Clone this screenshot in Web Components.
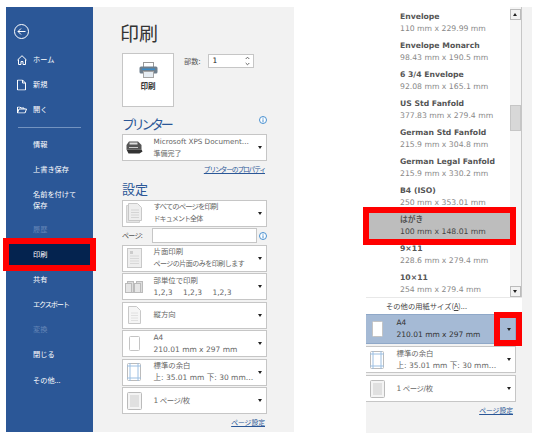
<!DOCTYPE html>
<html lang="ja">
<head>
<meta charset="utf-8">
<style>
  html, body { margin: 0; padding: 0; background: #fff; }
  body { width: 542px; height: 445px; overflow: hidden; font-family: "DejaVu Sans", "Noto Sans CJK JP", sans-serif; }
</style>
</head>
<body>
<template id="print-option-tpl">
  <style>
    :host { display: flex; align-items: center; box-sizing: border-box; height: 27px; background: #fff; border: 1px solid #c6c6c6; position: relative; color: #666; }
    :host([active]) { background: #a5bad5; border-color: #8fa8c8; color: #333; }
    .icon { width: 22px; flex: none; display: flex; justify-content: center; }
    .text { flex: 1; margin-left: 8.5px; min-width: 0; font-size: 7.4px; line-height: 12px; white-space: nowrap; }
    .arrow { flex: none; width: 0; height: 0; border: 2.5px solid transparent; border-top: 3px solid #222; border-bottom: 0; margin-right: 4px; }
    .l2 { display: block; font-size: 7.5px; }
  </style>
  <div class="icon"><slot name="icon"></slot></div>
  <div class="text"><slot></slot><span class="l2"><slot name="sub"></slot></span></div>
  <div class="arrow"></div>
</template>
<script>
class PrintOption extends HTMLElement {
  constructor() {
    super();
    this.attachShadow({ mode: "open" }).appendChild(document.getElementById("print-option-tpl").content.cloneNode(true));
  }
}
customElements.define("print-option", PrintOption);

const plainPage = (w, h) =>
  `<svg slot="icon" width="${w}" height="${h}" viewBox="0 0 ${w} ${h}"><rect x=".5" y=".5" width="${w - 1}" height="${h - 1}" rx="1" fill="#fff" stroke="#c4c4c4"/></svg>`;
const stackIcon = `<svg slot="icon" width="16" height="20" viewBox="0 0 16 20"><path d="M.5 2.500h10l3 3V19.500H.5z" fill="#e4e4e4" stroke="#d0d0d0"/><path d="M2.500.5h9l4 4v13h-13z" fill="#eee" stroke="#c8c8c8"/><path d="M5 7h8M5 9.500h8M5 12h8M5 14.500h8" stroke="#d4d4d4"/></svg>`;
const sidedIcon = `<svg slot="icon" width="15" height="20" viewBox="0 0 15 20"><rect x=".5" y=".5" width="14" height="19" fill="#eee" stroke="#c8c8c8"/><path d="M3 8h9M3 10.500h9M3 13h9M3 15.500h9" stroke="#d8d8d8"/><rect x="3" y="3" width="3" height="3" fill="#ccc"/></svg>`;
const collateIcon = `<svg slot="icon" width="18" height="12" viewBox="0 0 18 12"><rect x="2.500" y=".5" width="6" height="11" fill="#ddd" stroke="#bbb"/><rect x=".5" y="2.500" width="6" height="9" fill="#e6e6e6" stroke="#bbb"/><rect x="11.500" y=".5" width="6" height="11" fill="#ddd" stroke="#bbb"/><rect x="9.500" y="2.500" width="6" height="9" fill="#e6e6e6" stroke="#bbb"/></svg>`;
const portraitIcon = `<svg slot="icon" width="13" height="18" viewBox="0 0 13 18"><path d="M.5.5h8l4 4v13H.5z" fill="#f5f5f5" stroke="#c8c8c8"/><path d="M3 7h7M3 9.500h7M3 12h7M3 14.500h7" stroke="#e0e0e0"/></svg>`;
const marginIcon = `<svg slot="icon" width="14" height="18" viewBox="0 0 14 18"><rect x=".5" y=".5" width="13" height="17" rx="1" fill="#fff" stroke="#bbb"/><path d="M3 0v18M11 0v18M0 3h14M0 15h14" stroke="#9cbfe2"/></svg>`;
const sheetIcon = `<svg slot="icon" width="15" height="18" viewBox="0 0 15 18"><rect x=".5" y=".5" width="14" height="17" rx="1" fill="#f4f4f4" stroke="#bbb"/><rect x="3" y="3" width="9" height="12" fill="#e0e0e0"/></svg>`;
const infoIcon = `<svg width="8" height="8" viewBox="0 0 8 8" style="flex:none"><circle cx="4" cy="4" r="3.500" fill="#fff" stroke="#4a90d0"/><path d="M4 3.300V6.300M4 1.700v1" stroke="#4a90d0"/></svg>`;

class NavItem extends HTMLElement {
  constructor() {
    super();
    this.attachShadow({ mode: "open" }).innerHTML = `
      <style>
        :host { display: flex; align-items: center; color: #fff; font-size: 7.2px; line-height: 11px; padding-left: 27px; box-sizing: border-box; height: 25px; position: relative; font-family: "Noto Sans CJK JP", sans-serif; }
        :host([dim]) { color: #6485b6; }
        :host([selected]) { isolation: isolate; z-index: 1; }
        :host([selected])::before { content: ""; position: absolute; left: 3px; right: 3px; top: 2px; bottom: 2px; background: #04234f; outline: 6px solid #f00; z-index: -1; }
        ::slotted(svg) { position: absolute; left: 11px; top: 50%; transform: translateY(-50%); }
      </style>
      <slot></slot>`;
  }
}
customElements.define("nav-item", NavItem);

class BackstageNav extends HTMLElement {
  constructor() {
    super();
    this.attachShadow({ mode: "open" }).innerHTML = `
      <style>
        :host { display: block; width: 87px; height: 425px; flex: none; background: #2b5797; box-sizing: border-box; padding-top: 17px; }
        .back { display: block; margin: 0 0 8px 8px; }
        hr { border: 0; height: 1px; background: #7393c0; margin: 5px 12px 4px 12px; }
      </style>
      <svg class="back" width="15" height="15" viewBox="0 0 15 15" fill="none" stroke="#fff"><circle cx="7.500" cy="7.500" r="7"/><path d="M11.500 7.500H4M7 4.500l-3 3 3 3"/></svg>
      <nav-item><svg width="10" height="10" viewBox="0 0 10 10" fill="none" stroke="#fff"><path d="M.5 5 5 .7 9.500 5M1.500 4.500v5h2.500V6.500h2v3h2.500v-5"/></svg>ホーム</nav-item>
      <nav-item><svg width="9" height="11" viewBox="0 0 9 11" fill="none" stroke="#fff"><path d="M.5.5h5l3 3v7h-8zM5.500.5v3h3"/></svg>新規</nav-item>
      <nav-item><svg width="10" height="7" viewBox="0 0 10 7" fill="none" stroke="#fff"><path d="M.5 6.500v-6h2.500l1 1h3v1M.5 6.500l1.500-4h7.500l-1.500 4z"/></svg>開く</nav-item>
      <hr>
      <nav-item>情報</nav-item>
      <nav-item>上書き保存</nav-item>
      <nav-item style="height:35px">名前を付けて<br>保存</nav-item>
      <nav-item dim>履歴</nav-item>
      <nav-item selected>印刷</nav-item>
      <nav-item>共有</nav-item>
      <nav-item style="letter-spacing:-1.200px">エクスポート</nav-item>
      <nav-item dim>変換</nav-item>
      <nav-item>閉じる</nav-item>
      <nav-item style="margin-top:1px">その他...</nav-item>`;
  }
}
customElements.define("backstage-nav", BackstageNav);

class PrintPanel extends HTMLElement {
  constructor() {
    super();
    this.attachShadow({ mode: "open" }).innerHTML = `
      <style>
        :host { display: block; width: 201px; height: 425px; flex: none; background: #f2f2f2; box-sizing: border-box; padding: 14px 0 0 29px; color: #555; }
        h1, h2 { font-family: "Noto Sans CJK JP", sans-serif; font-weight: 400; margin: 0; }
        h1 { font-size: 19px; line-height: 24px; margin: 0 0 8px -2px; color: #333; }
        .top { display: flex; align-items: flex-start; height: 54px; }
        .btn { width: 52px; height: 54px; box-sizing: border-box; background: #fff; border: 1px solid #c6c6c6; display: flex; flex-direction: column; align-items: center; padding-top: 8px; font: 700 7.500px/10px "Noto Sans CJK JP", sans-serif; color: #333; gap: 3px; }
        .copies { margin: 1px 0 0 10px; font: 7.200px/14px "Noto Sans CJK JP", sans-serif; display: flex; align-items: center; gap: 8px; height: 14px; }
        .spin { width: 46px; height: 14px; box-sizing: border-box; background: #fff; border: 1px solid #c6c6c6; padding-left: 3px; font: 7.500px/12px "DejaVu Sans", sans-serif; display: flex; justify-content: space-between; align-items: center; color: #222; }
        h2 { font-size: 13px; line-height: 18px; color: #2b5797; display: flex; justify-content: space-between; align-items: flex-start; width: 145px; }
        h2 svg { margin-top: 1px; }
        .list { display: flex; flex-direction: column; width: 145px; gap: 1.500px; margin-top: 1.500px; }
        print-option { width: 145px; }
        a { display: block; width: 143px; text-align: right; font: 6.800px/11px "Noto Sans CJK JP", sans-serif; color: #2b5797; text-decoration: underline; margin-top: 3px; }
        .pages { display: flex; align-items: center; font: 7px/15px "Noto Sans CJK JP", sans-serif; height: 15px; }
        .pages span { width: 30px; white-space: nowrap; letter-spacing: -.7px; }
        .pages b { display: block; width: 105px; height: 15px; box-sizing: border-box; background: #fff; border: 1px solid #c6c6c6; margin-right: 2px; }
      </style>
      <h1>印刷</h1>
      <div class="top">
        <div class="btn">
          <svg width="19" height="16" viewBox="0 0 19 16"><rect x="4.500" y=".5" width="10" height="5" fill="#fff" stroke="#999"/><rect x=".5" y="4.500" width="18" height="7" rx="1.500" fill="#6f7f8d"/><rect x="3" y="6.500" width="13" height="1.500" fill="#3c8bc6"/><rect x="4.500" y="9.500" width="10" height="6" fill="#e6edf3" stroke="#a5a5a5"/></svg>
          印刷
        </div>
        <div class="copies">部数: <div class="spin">1<svg width="5" height="10" viewBox="0 0 5 10" fill="none" stroke="#666" style="margin-right:3px"><path d="M.7 3 2.500 1.200 4.300 3M.7 7l1.800 1.800L4.300 7"/></svg></div></div>
      </div>
      <h2 style="margin-top:8px;margin-bottom:1px"><span style="letter-spacing:-3.300px">プリンター</span>${infoIcon}</h2>
      <print-option>
        <svg slot="icon" width="18" height="13" viewBox="0 0 18 13"><path d="M4 .5h9l3.500 3.500v4.500h-15V4z" fill="#555"/><rect x="4.500" y="1.500" width="8" height="2" fill="#ddd"/><path d="M1.500 8.500h15l1 2-3 2h-11z" fill="#333"/><rect x="4" y="6" width="9" height="1" fill="#ccc"/></svg>
        <span style="font-size:7.200px">Microsoft XPS Document…</span><span slot="sub" style="font-size:7px">準備完了</span>
      </print-option>
      <a style="letter-spacing:-1.200px">プリンターのプロパティ</a>
      <h2 style="margin-top:5px">設定</h2>
      <div class="list">
        <print-option>${stackIcon}<span style="letter-spacing:-.9px">すべてのページを印刷</span><span slot="sub" style="font-size:7px;letter-spacing:-.9px">ドキュメント全体</span></print-option>
        <div class="pages"><span>ページ:</span><b></b>${infoIcon}</div>
        <print-option>${sidedIcon}片面印刷<span slot="sub" style="font-size:7px;letter-spacing:-.5px">ページの片面のみを印刷します</span></print-option>
        <print-option>${collateIcon}部単位で印刷<span slot="sub" style="word-spacing:8px">1,2,3 1,2,3 1,2,3</span></print-option>
        <print-option>${portraitIcon}縦方向</print-option>
        <print-option>${plainPage(11, 15)}A4<span slot="sub">210.01 mm x 297 mm</span></print-option>
        <print-option>${marginIcon}標準の余白<span slot="sub">上: 35.01 mm 下: 30 mm…</span></print-option>
        <print-option>${sheetIcon}<span style="letter-spacing:-.4px">1 ページ/枚</span></print-option>
      </div>
      <a>ページ設定</a>`;
  }
}
customElements.define("print-panel", PrintPanel);

class PaperEntry extends HTMLElement {
  constructor() {
    super();
    this.attachShadow({ mode: "open" }).innerHTML = `
      <style>
        :host { display: block; position: relative; height: 29px; padding: 3px 0 0 34px; font-size: 7.700px; line-height: 11.500px; color: #888; box-sizing: border-box; }
        b { display: block; color: #555; }
        :host([selected]) { color: #444; isolation: isolate; z-index: 1; }
        :host([selected])::before { content: ""; position: absolute; left: 3px; right: 0; top: 2px; bottom: 1px; background: #bdbdbd; outline: 6px solid #f00; z-index: -1; }
      </style>
      <b><slot></slot></b><slot name="size"></slot>`;
  }
}
customElements.define("paper-entry", PaperEntry);

class PaperList extends HTMLElement {
  constructor() {
    super();
    const data = [
      ["Envelope", "110 mm x 229.99 mm"], ["Envelope Monarch", "98.43 mm x 190.5 mm"],
      ["6 3/4 Envelope", "92.08 mm x 165.1 mm"], ["US Std Fanfold", "377.83 mm x 279.4 mm"],
      ["German Std Fanfold", "215.9 mm x 304.8 mm"], ["German Legal Fanfold", "215.9 mm x 330.2 mm"],
      ["B4 (ISO)", "250 mm x 353.01 mm"], ["はがき", "100 mm x 148.01 mm", 1],
      ["9×11", "228.6 mm x 279.4 mm"], ["10×11", "254 mm x 279.4 mm"],
    ];
    this.attachShadow({ mode: "open" }).innerHTML = `
      <style>
        :host { display: block; width: 166px; height: 426px; flex: none; margin-left: 72px; background: #f2f2f2; box-sizing: border-box; }
        .dropdown { width: 156px; height: 290px; display: flex; border-right: 1px solid #c6c6c6; background: #fff; box-sizing: border-box; }
        .items { flex: 1; padding-top: 1px; min-width: 0; }
        .bar { width: 11px; flex: none; background: #f5f5f5; padding: 2px 0 0; box-sizing: border-box; display: flex; flex-direction: column; justify-content: space-between; position: relative; }
        .bar i { display: block; width: 11px; height: 11px; box-sizing: border-box; background: #f2f2f2; border: 1px solid #bbb; position: relative; }
        .bar i::after { content: ""; position: absolute; left: 2px; top: 3px; border: 2px solid transparent; border-top: 0; border-bottom: 3px solid #222; }
        .bar i.down::after { border-bottom: 0; border-top: 3px solid #222; }
        .bar .thumb { position: absolute; left: 0; top: 98px; height: 26px; background: #d8d8d8; border-color: #c6c6c6; }
        .bar .thumb::after { display: none; }
        .more { width: 156px; height: 17px; box-sizing: border-box; background: #fff; font: 7.300px/17px "Noto Sans CJK JP", sans-serif; color: #444; padding-left: 20px; border-top: 1px solid #e8e8e8; white-space: nowrap; }
        .lower { display: flex; flex-direction: column; gap: 2px; }
        print-option { width: 150px; border-left: 0; }
        .wrap { position: relative; width: 150px; }
        .mark { position: absolute; right: -6px; top: -2px; width: 28px; height: 34px; box-sizing: border-box; border: 6px solid #f00; }
        a { display: block; width: 147px; text-align: right; font: 6.800px/11px "Noto Sans CJK JP", sans-serif; color: #2b5797; text-decoration: underline; margin-top: 1px; }
      </style>
      <div class="dropdown">
        <div class="items">
          ${data.map(d => `<paper-entry ${d[2] ? "selected" : ""}>${d[0]}<span slot="size">${d[1]}</span></paper-entry>`).join("")}
        </div>
        <div class="bar"><i></i><i class="thumb"></i><i class="down"></i></div>
      </div>
      <div class="more">その他の用紙サイズ(<u>A</u>)...</div>
      <div class="lower">
        <div class="wrap">
          <print-option active style="width:150px;height:30px">${plainPage(11, 16)}A4<span slot="sub">210.01 mm x 297 mm</span></print-option>
          <div class="mark"></div>
        </div>
        <print-option>${marginIcon}標準の余白<span slot="sub">上: 35.01 mm 下: 30 mm…</span></print-option>
        <print-option>${sheetIcon}<span style="letter-spacing:-.4px">1 ページ/枚</span></print-option>
        <a>ページ設定</a>
      </div>`;
  }
}
customElements.define("paper-list", PaperList);

class PrintPage extends HTMLElement {
  constructor() {
    super();
    this.attachShadow({ mode: "open" }).innerHTML = `
      <style>:host { display: flex; padding: 7px 0 0 6px; }</style>
      <backstage-nav></backstage-nav>
      <print-panel></print-panel>
      <paper-list></paper-list>`;
  }
}
customElements.define("print-page", PrintPage);
</script>
<print-page></print-page>
</body>
</html>
